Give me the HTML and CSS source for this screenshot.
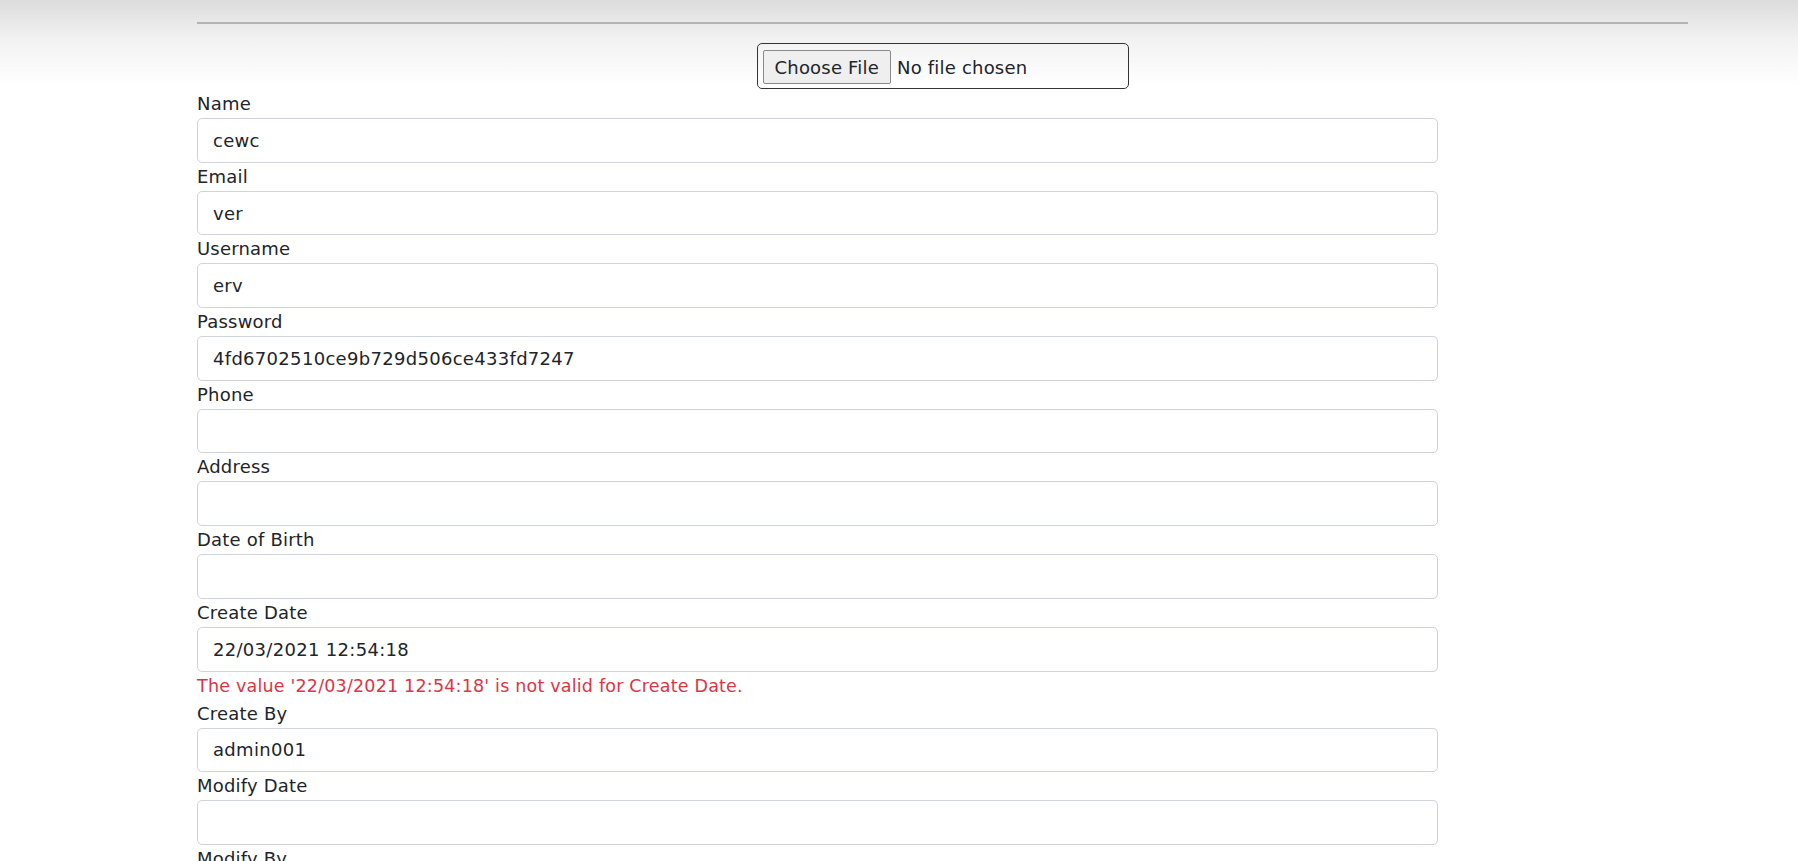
FILE: index.html
```html
<!DOCTYPE html>
<html lang="en">
<head>
<meta charset="utf-8">
<title>Edit User</title>
<link rel="stylesheet" href="styles.css">
</head>
<body>
<div class="container">
  <hr class="rule">
  <div class="upload-row">
    <div class="upload"><input type="file" class="file-input"></div>
  </div>
  <form class="form">
    <div class="field"><label class="label">Name</label><input class="control" type="text" value="cewc"></div>
    <div class="field"><label class="label">Email</label><input class="control" type="text" value="ver"></div>
    <div class="field"><label class="label">Username</label><input class="control" type="text" value="erv"></div>
    <div class="field"><label class="label">Password</label><input class="control" type="text" value="4fd6702510ce9b729d506ce433fd7247"></div>
    <div class="field"><label class="label">Phone</label><input class="control" type="text" value=""></div>
    <div class="field"><label class="label">Address</label><input class="control" type="text" value=""></div>
    <div class="field"><label class="label">Date of Birth</label><input class="control" type="text" value=""></div>
    <div class="field"><label class="label">Create Date</label><input class="control" type="text" value="22/03/2021 12:54:18"><span class="error">The value '22/03/2021 12:54:18' is not valid for Create Date.</span></div>
    <div class="field"><label class="label">Create By</label><input class="control" type="text" value="admin001"></div>
    <div class="field"><label class="label">Modify Date</label><input class="control" type="text" value=""></div>
    <div class="field"><label class="label">Modify By</label><input class="control" type="text" value=""></div>
  </form>
</div>
</body>
</html>
```

FILE: styles.css
```css
html, body {
  margin: 0;
  padding: 0;
}
body {
  background: linear-gradient(#dcdcdc 0px, #f2f2f2 40px, #ffffff 85px) no-repeat;
  background-color: #ffffff;
  font-family: "DejaVu Sans", "Noto Sans", sans-serif;
  color: #212529;
  font-size: 18px;
}
.container {
  margin: 0 110px 0 197px;
  padding-top: 22px;
}
.rule {
  margin: 0;
  border: 0;
  height: 2px;
  background: #b3b3b3;
}
.upload-row {
  display: flex;
  justify-content: center;
  margin-top: 19px;
}
.upload {
  box-sizing: border-box;
  width: 372px;
  height: 46px;
  border: 1px solid #333333;
  border-radius: 5px;
  padding: 6px 5px;
  display: flex;
  align-items: flex-start;
}
.file-input {
  font-family: "DejaVu Sans", "Noto Sans", sans-serif;
  font-size: 18px;
  letter-spacing: 0.2px;
  color: #212529;
  height: 34px;
}
.file-input::file-selector-button {
  height: 34px;
  padding: 0 11px;
  margin-right: 6px;
  border: 1px solid #8a8a8a;
  border-radius: 2px;
  background: #efefef;
  color: #212529;
  font-family: inherit;
  font-size: 18px;
  letter-spacing: 0.2px;
}
.form {
  display: flex;
  flex-direction: column;
  width: 1241px;
  margin-top: 1px;
}
.field {
  display: flex;
  flex-direction: column;
}
.label {
  display: block;
  line-height: 28px;
  font-size: 18px;
  letter-spacing: 0.2px;
}
.control {
  box-sizing: border-box;
  height: 44.7px;
  width: 100%;
  border: 1px solid #ced4da;
  border-radius: 5px;
  padding: 0 15px;
  font-family: "DejaVu Sans", "Noto Sans", sans-serif;
  font-size: 18px;
  letter-spacing: 0.3px;
  color: #212529;
  background: #ffffff;
  margin: 0;
}
.error {
  line-height: 28px;
  font-size: 17.5px;
  letter-spacing: 0.2px;
  color: #dc3545;
}
```
